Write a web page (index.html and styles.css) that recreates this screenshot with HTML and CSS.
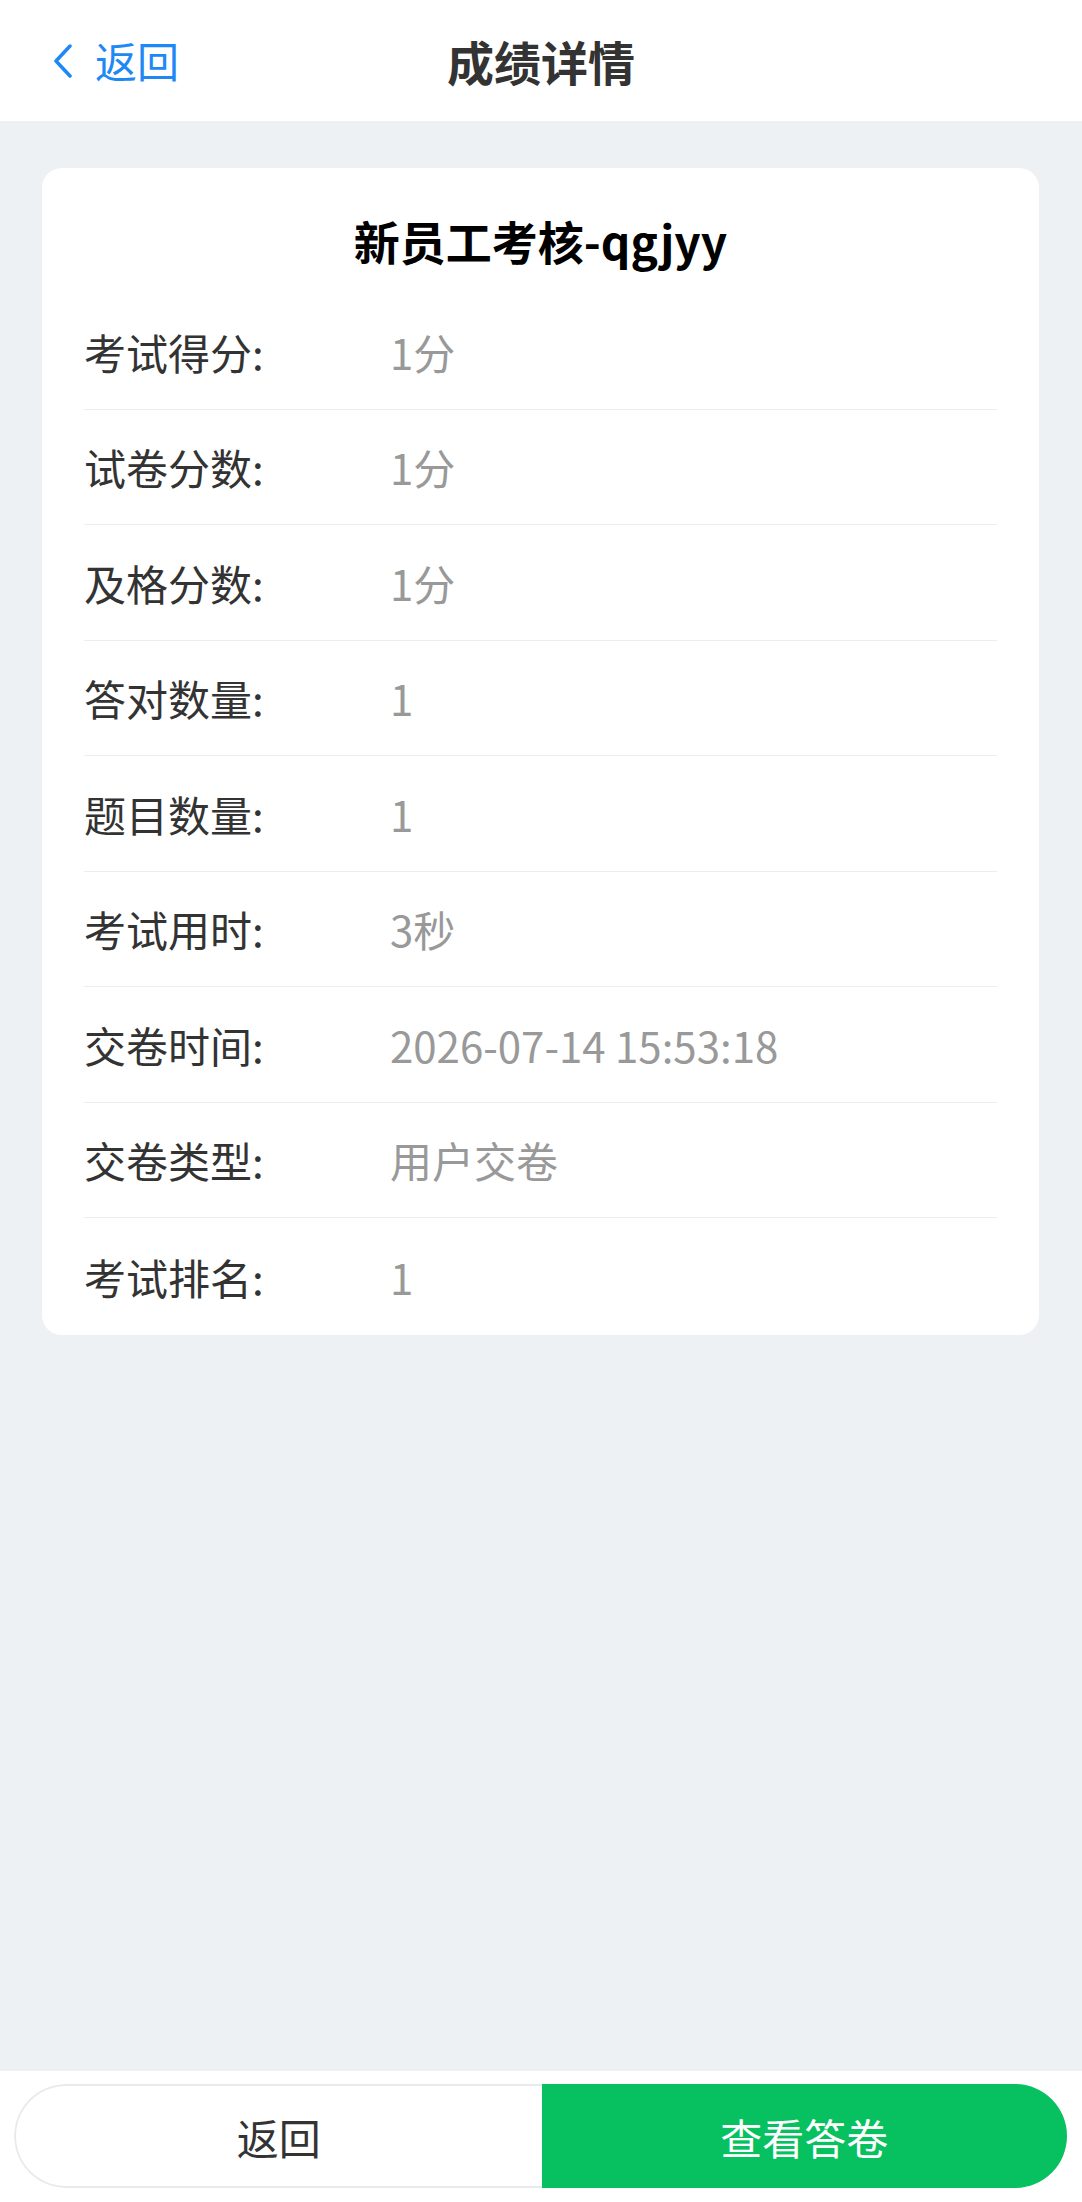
FILE: index.html
```html
<!DOCTYPE html>
<html lang="zh-CN">
<head>
<meta charset="utf-8">
<title>成绩详情</title>
<link rel="stylesheet" href="styles.css">
</head>
<body>
<div class="page">
  <header class="topbar">
    <div class="back">
      <svg class="chev" width="20" height="34" viewBox="0 0 20 34"><path d="M17 2 L3 17 L17 32" fill="none" stroke="#1e88f5" stroke-width="3.5" stroke-linecap="round" stroke-linejoin="round"/></svg>
      <span class="back-text">返回</span>
    </div>
    <div class="title">成绩详情</div>
    <div></div>
  </header>
  <main class="main">
    <section class="card">
      <h1 class="card-title">新员工考核-qgjyy</h1>
      <div class="row"><span class="label">考试得分:</span><span class="value">1分</span></div>
      <div class="row"><span class="label">试卷分数:</span><span class="value">1分</span></div>
      <div class="row"><span class="label">及格分数:</span><span class="value">1分</span></div>
      <div class="row"><span class="label">答对数量:</span><span class="value">1</span></div>
      <div class="row"><span class="label">题目数量:</span><span class="value">1</span></div>
      <div class="row"><span class="label">考试用时:</span><span class="value">3秒</span></div>
      <div class="row"><span class="label">交卷时间:</span><span class="value">2026-07-14 15:53:18</span></div>
      <div class="row"><span class="label">交卷类型:</span><span class="value">用户交卷</span></div>
      <div class="row last"><span class="label">考试排名:</span><span class="value">1</span></div>
    </section>
  </main>
  <footer class="footer">
    <div class="btns">
      <div class="btn btn-back">返回</div>
      <div class="btn btn-view">查看答卷</div>
    </div>
  </footer>
</div>
</body>
</html>
```
FILE: styles.css
```css
html, body {
  margin: 0;
  padding: 0;
}
body {
  font-family: "Noto Sans CJK SC", "Noto Sans", sans-serif;
  background: #eef1f4;
  color: #333;
}
.page {
  display: flex;
  flex-direction: column;
  min-height: 100vh;
}
.topbar {
  height: 121px;
  background: #fff;
  display: grid;
  grid-template-columns: 1fr auto 1fr;
  align-items: center;
}
.back {
  display: flex;
  align-items: center;
  padding-left: 53px;
  gap: 22px;
  color: #1e88f5;
  font-size: 42px;
  line-height: 1;
}
.chev {
  display: block;
}
.back-text {
  position: relative;
  top: -1px;
}
.title {
  font-size: 47px;
  font-weight: 700;
  color: #333;
  line-height: 1;
}
.main {
  flex: 1;
  padding: 47px 43px 40px 42px;
}
.card {
  background: #fff;
  border-radius: 20px;
  padding: 0 42px;
}
.card-title {
  margin: 0;
  padding: 40px 0 22px;
  text-align: center;
  font-size: 46px;
  line-height: 64px;
  font-weight: 700;
  color: #000;
}
.row {
  display: flex;
  align-items: center;
  height: 114.5px;
  border-bottom: 1px solid #ebedf0;
  font-size: 42px;
}
.row.last {
  border-bottom: none;
  height: 117px;
}
.label {
  width: 306px;
  color: #333;
}
.value {
  color: #999;
}
.footer {
  background: #fff;
  height: 131px;
  padding: 13px 15px 0 14px;
  box-sizing: border-box;
}
.btns {
  display: flex;
  height: 104px;
  border-radius: 52px;
  overflow: hidden;
}
.btn {
  flex: 1;
  display: flex;
  align-items: center;
  justify-content: center;
  font-size: 42px;
  box-sizing: border-box;
}
.btn-back {
  background: #fff;
  color: #333;
  border: 2px solid #e8eaed;
  border-right: none;
  border-radius: 52px 0 0 52px;
}
.btn-view {
  background: #07c160;
  color: #fff;
}
```
